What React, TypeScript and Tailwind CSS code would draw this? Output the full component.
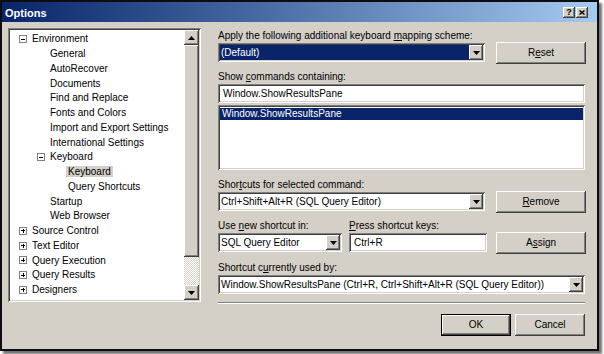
import { ReactNode } from 'react'

const raised =
  'shadow-[inset_-1px_-1px_#404040,inset_1px_1px_#ffffff,inset_-2px_-2px_#808080,inset_2px_2px_#d4d0c8]'
const sunken =
  'shadow-[inset_1px_1px_#808080,inset_-1px_-1px_#ffffff,inset_2px_2px_#404040,inset_-2px_-2px_#d4d0c8]'

function Btn({ children, w = 'w-[90px]', def = false }: { children: ReactNode; w?: string; def?: boolean }) {
  return (
    <div className={`${w} h-[22px] ${def ? 'border border-black' : ''} bg-[#d4d0c8]`}>
      <div className={`w-full h-full flex items-center justify-center ${raised}`}>{children}</div>
    </div>
  )
}

function Arrow() {
  return (
    <div className={`w-[14px] h-full bg-[#d4d0c8] flex items-center justify-center ${raised}`}>
      <svg width="7" height="4" viewBox="0 0 7 4">
        <path d="M0 0h7L3.5 4z" fill="#000" />
      </svg>
    </div>
  )
}

function Combo({ text, w, selected = false }: { text: string; w: string; selected?: boolean }) {
  return (
    <div className={`${w} h-[19px] bg-white p-[2px] flex ${sunken}`}>
      <div className={`flex-1 flex items-center pl-[1px] ${selected ? 'bg-[#0a246a] text-white' : ''}`}>{text}</div>
      <Arrow />
    </div>
  )
}

function Field({ text, w }: { text: string; w: string }) {
  return (
    <div className={`${w} h-[19px] bg-white flex items-center pl-[5px] ${sunken}`}>{text}</div>
  )
}

function Box({ open }: { open: boolean }) {
  return (
    <div className="w-[8px] h-[8px] border border-[#808080] bg-white relative">
      <div className="absolute left-[1px] top-[2.5px] w-[4px] h-[1px] bg-black" />
      {!open && <div className="absolute left-[2.5px] top-[1px] w-[1px] h-[4px] bg-black" />}
    </div>
  )
}

const tree: { label: string; level: number; box?: 'open' | 'closed'; sel?: boolean }[] = [
  { label: 'Environment', level: 0, box: 'open' },
  { label: 'General', level: 1 },
  { label: 'AutoRecover', level: 1 },
  { label: 'Documents', level: 1 },
  { label: 'Find and Replace', level: 1 },
  { label: 'Fonts and Colors', level: 1 },
  { label: 'Import and Export Settings', level: 1 },
  { label: 'International Settings', level: 1 },
  { label: 'Keyboard', level: 1, box: 'open' },
  { label: 'Keyboard', level: 2, sel: true },
  { label: 'Query Shortcuts', level: 2 },
  { label: 'Startup', level: 1 },
  { label: 'Web Browser', level: 1 },
  { label: 'Source Control', level: 0, box: 'closed' },
  { label: 'Text Editor', level: 0, box: 'closed' },
  { label: 'Query Execution', level: 0, box: 'closed' },
  { label: 'Query Results', level: 0, box: 'closed' },
  { label: 'Designers', level: 0, box: 'closed' },
]

const textPad = ['pl-[22px]', 'pl-[40px]', 'pl-[56px]']
const boxPad = ['pl-[9px]', 'pl-[27px]', 'pl-[45px]']

function Tree() {
  return (
    <div className={`w-[193px] h-[274px] bg-white p-[2px] flex ${sunken}`}>
      <div className="flex-1 pt-[2px] overflow-hidden">
        {tree.map((t, i) => (
          <div key={i} className="h-[14.76px] relative flex items-center">
            {t.box && (
              <div className={`absolute left-0 top-[3px] ${boxPad[t.level]}`}>
                <Box open={t.box === 'open'} />
              </div>
            )}
            <div className={textPad[t.level]}>
              <span className={t.sel ? 'bg-[#d4d0c8] px-[2px]' : t.level === 2 ? 'px-[2px]' : ''}>{t.label}</span>
            </div>
          </div>
        ))}
      </div>
      {/* scrollbar */}
      <div className="w-[15px] flex flex-col bg-[#eceae6]">
        <div className={`h-[15px] bg-[#d4d0c8] flex items-center justify-center ${raised}`}>
          <svg width="7" height="4" viewBox="0 0 7 4">
            <path d="M3.5 0L7 4H0z" fill="#000" />
          </svg>
        </div>
        <div className={`h-[212px] bg-[#d4d0c8] ${raised}`} />
        <div className="flex-1 bg-[repeating-conic-gradient(#ffffff_0_25%,#d4d0c8_0_50%)] bg-[length:2px_2px]" />
        <div className={`h-[15px] bg-[#d4d0c8] flex items-center justify-center ${raised}`}>
          <svg width="7" height="4" viewBox="0 0 7 4">
            <path d="M0 0h7L3.5 4z" fill="#000" />
          </svg>
        </div>
      </div>
    </div>
  )
}

export default function App() {
  return (
    <div className="w-[604px] h-[354px] bg-white text-[10px] text-black font-['Liberation_Sans',Arial,sans-serif] leading-[12px]">
      <div className="w-[599px] h-[351px] border-2 border-[#0d0d0d] bg-[#d4d0c8] flex flex-col shadow-[3px_3px_2px_rgba(0,0,0,0.55)]">
        {/* title bar */}
        <div className="h-[20px] bg-linear-to-r from-[#0a246a] to-[#a6caf0] flex items-center pl-[3px] pr-[9px]">
          <span className="flex-1 text-white font-bold text-[11px] pt-[2px]">Options</span>
          <div className={`w-[12px] h-[11px] bg-[#d4d0c8] flex items-center justify-center font-bold text-[9px] ${raised}`}>?</div>
          <div className={`ml-[1px] w-[12px] h-[11px] bg-[#d4d0c8] flex items-center justify-center ${raised}`}>
            <svg width="6" height="5" viewBox="0 0 6 5">
              <path d="M0.5 0.5L5.5 4.5M5.5 0.5L0.5 4.5" stroke="#000" strokeWidth="1.4" />
            </svg>
          </div>
        </div>

        <div className="flex-1 flex pl-[6px] pt-[6px]">
          <Tree />

          <div className="ml-[17px] w-[368px] flex flex-col">
            <div className="mt-[2px]">
              Apply the following additional keyboard <u>m</u>apping scheme:
            </div>
            <div className="flex items-start justify-between">
              <div className="mt-[1px]">
                <Combo text="(Default)" w="w-[267px]" selected />
              </div>
              <Btn>
                R<u>e</u>set
              </Btn>
            </div>

            <div className="mt-[7px]">
              Show <u>c</u>ommands containing:
            </div>
            <div className="mt-[1px]">
              <Field text="Window.ShowResultsPane" w="w-[367px]" />
            </div>
            <div className={`mt-[2px] w-[367px] h-[65px] bg-white p-[2px] ${sunken}`}>
              <div className="mt-[1px] h-[12px] bg-[#0a246a] text-white flex items-center pl-[2px]">
                Window.ShowResultsPane
              </div>
            </div>

            <div className="mt-[9px]">
              Shor<u>t</u>cuts for selected command:
            </div>
            <div className="flex items-start justify-between">
              <div className="mt-[1px]">
                <Combo text="Ctrl+Shift+Alt+R (SQL Query Editor)" w="w-[267px]" />
              </div>
              <Btn>
                <u>R</u>emove
              </Btn>
            </div>

            <div className="mt-[7px] flex">
              <div className="w-[131px]">
                Use <u>n</u>ew shortcut in:
              </div>
              <div>
                <u>P</u>ress shortcut keys:
              </div>
            </div>
            <div className="flex items-start">
              <div className="mt-[1px] flex">
                <Combo text="SQL Query Editor" w="w-[124px]" />
                <div className="ml-[7px]">
                  <Field text="Ctrl+R" w="w-[138px]" />
                </div>
              </div>
              <div className="ml-auto">
                <Btn>
                  A<u>s</u>sign
                </Btn>
              </div>
            </div>

            <div className="mt-[8px]">
              Shortcut c<u>u</u>rrently used by:
            </div>
            <div className="mt-[1px]">
              <Combo text="Window.ShowResultsPane (Ctrl+R, Ctrl+Shift+Alt+R (SQL Query Editor))" w="w-[367px]" />
            </div>

            <div className="mt-[8px] w-[367px] h-[2px] border-t border-t-[#808080] border-b border-b-white" />

            <div className="mt-[10px] flex justify-end gap-[4px] pr-[1px]">
              <Btn w="w-[70px]" def>
                OK
              </Btn>
              <Btn w="w-[70px]">Cancel</Btn>
            </div>
          </div>
        </div>
      </div>
    </div>
  )
}
